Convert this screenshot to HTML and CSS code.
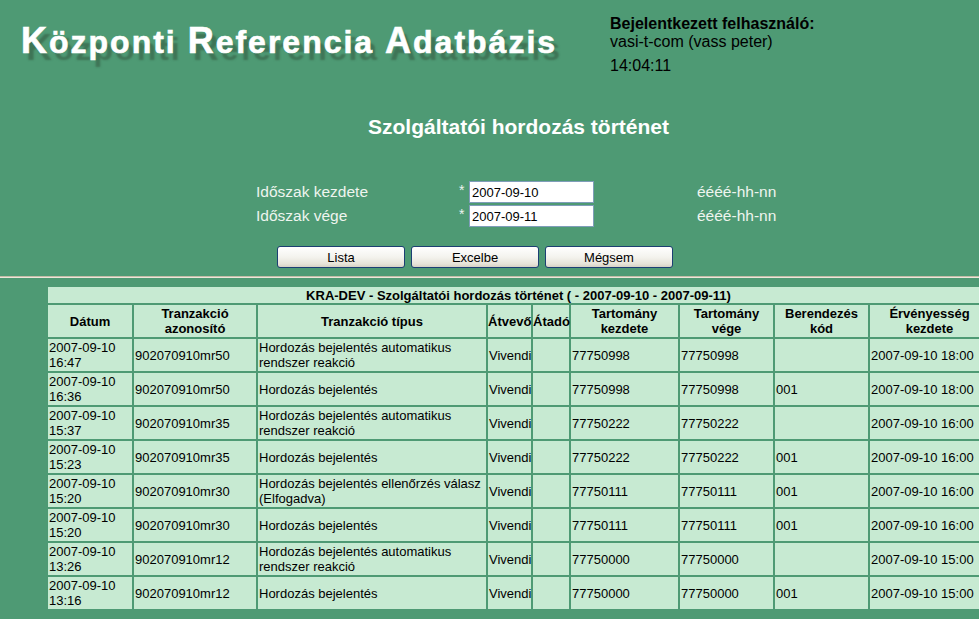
FILE: index.html
```html
<!DOCTYPE html>
<html lang="hu">
<head>
<meta charset="utf-8">
<title>Szolgáltatói hordozás történet</title>
<link rel="stylesheet" href="styles.css">
</head>
<body>
<div class="top">
  <div class="logo"><span class="cap">K</span><span class="low">özponti </span><span class="cap">R</span><span class="low">eferencia </span><span class="cap">A</span><span class="low">datbázis</span></div>
  <div class="user">
    <div class="user-label">Bejelentkezett felhasználó:</div>
    <div class="user-name">vasi-t-com (vass peter)</div>
    <div class="user-time">14:04:11</div>
  </div>
</div>

<h1 class="title">Szolgáltatói hordozás történet</h1>

<form class="filter">
  <div class="frow">
    <span class="flabel">Időszak kezdete</span>
    <span class="fstar">*</span>
    <input class="finput" type="text" value="2007-09-10">
    <span class="fformat">éééé-hh-nn</span>
  </div>
  <div class="frow">
    <span class="flabel">Időszak vége</span>
    <span class="fstar">*</span>
    <input class="finput" type="text" value="2007-09-11">
    <span class="fformat">éééé-hh-nn</span>
  </div>
  <div class="buttons">
    <button type="button" class="btn">Lista</button>
    <button type="button" class="btn">Excelbe</button>
    <button type="button" class="btn">Mégsem</button>
  </div>
</form>

<div class="sep"></div>

<table class="grid">
  <colgroup>
    <col class="c-date"><col class="c-id"><col class="c-type"><col class="c-atv"><col class="c-ata">
    <col class="c-tk"><col class="c-tv"><col class="c-ber"><col class="c-erv">
  </colgroup>
  <tr><td class="cap-cell" colspan="9">KRA-DEV - Szolgáltatói hordozás történet ( - 2007-09-10 - 2007-09-11)</td></tr>
  <tr class="head">
    <th>Dátum</th><th>Tranzakció azonosító</th><th>Tranzakció típus</th><th>Átvevő</th><th>Átadó</th>
    <th>Tartomány kezdete</th><th>Tartomány vége</th><th>Berendezés kód</th><th>Érvényesség kezdete</th>
  </tr>
  <tr><td>2007-09-10 16:47</td><td>902070910mr50</td><td>Hordozás bejelentés automatikus rendszer reakció</td><td>Vivendi</td><td></td><td>77750998</td><td>77750998</td><td></td><td>2007-09-10 18:00</td></tr>
  <tr><td>2007-09-10 16:36</td><td>902070910mr50</td><td>Hordozás bejelentés</td><td>Vivendi</td><td></td><td>77750998</td><td>77750998</td><td>001</td><td>2007-09-10 18:00</td></tr>
  <tr><td>2007-09-10 15:37</td><td>902070910mr35</td><td>Hordozás bejelentés automatikus rendszer reakció</td><td>Vivendi</td><td></td><td>77750222</td><td>77750222</td><td></td><td>2007-09-10 16:00</td></tr>
  <tr><td>2007-09-10 15:23</td><td>902070910mr35</td><td>Hordozás bejelentés</td><td>Vivendi</td><td></td><td>77750222</td><td>77750222</td><td>001</td><td>2007-09-10 16:00</td></tr>
  <tr><td>2007-09-10 15:20</td><td>902070910mr30</td><td>Hordozás bejelentés ellenőrzés válasz (Elfogadva)</td><td>Vivendi</td><td></td><td>77750111</td><td>77750111</td><td>001</td><td>2007-09-10 16:00</td></tr>
  <tr><td>2007-09-10 15:20</td><td>902070910mr30</td><td>Hordozás bejelentés</td><td>Vivendi</td><td></td><td>77750111</td><td>77750111</td><td>001</td><td>2007-09-10 16:00</td></tr>
  <tr><td>2007-09-10 13:26</td><td>902070910mr12</td><td>Hordozás bejelentés automatikus rendszer reakció</td><td>Vivendi</td><td></td><td>77750000</td><td>77750000</td><td></td><td>2007-09-10 15:00</td></tr>
  <tr><td>2007-09-10 13:16</td><td>902070910mr12</td><td>Hordozás bejelentés</td><td>Vivendi</td><td></td><td>77750000</td><td>77750000</td><td>001</td><td>2007-09-10 15:00</td></tr>
</table>
</body>
</html>
```

FILE: styles.css
```css
html, body {
  margin: 0;
  padding: 0;
  overflow: hidden;
}
body {
  background: #4e9a74;
  font-family: "Liberation Sans", Arial, sans-serif;
  color: #000;
  width: 1040px;
}

/* header */
.top {
  display: flex;
  height: 100px;
}
.logo {
  width: 589px;
  padding-left: 21px;
  margin-top: 21px;
  height: 40px;
  font-weight: bold;
  font-size: 36px;
  line-height: 40px;
  letter-spacing: 2px;
  color: #fff;
  white-space: nowrap;
  -webkit-text-stroke: 0.6px #fff;
  text-shadow: 5px 7px 2px #3f7456;
}
.logo .low {
  font-size: 32px;
  line-height: 1;
}
.user {
  padding-top: 15px;
  font-size: 16px;
  line-height: 18px;
  color: #000;
}
.user-label { font-weight: bold; }
.user-time { margin-top: 6px; }

/* title */
.title {
  margin: 15px 0 0 46px;
  width: 945px;
  text-align: center;
  font-size: 21px;
  line-height: 24px;
  font-weight: bold;
  color: #fff;
}

/* filter form */
.filter {
  margin: 42px 0 0 0;
}
.frow {
  display: grid;
  grid-template-columns: 203px 10px 125px auto;
  align-items: center;
  padding-left: 256px;
  height: 22px;
  margin-bottom: 2px;
  font-size: 15.5px;
  color: #eef5ef;
}
.fstar {
  font-size: 14px;
  position: relative;
  top: -2px;
}
.fformat {
  padding-left: 103px;
}
.finput {
  box-sizing: border-box;
  width: 125px;
  height: 22px;
  margin: 0;
  border: 1px solid #7f9db9;
  padding: 0 2px;
  background: #fff;
  font-family: "Liberation Sans", Arial, sans-serif;
  font-size: 13px;
  color: #000;
}
.buttons {
  display: flex;
  gap: 6px;
  padding-left: 277px;
  margin-top: 19px;
}
.btn {
  box-sizing: border-box;
  width: 128px;
  height: 22px;
  margin: 0;
  padding: 0;
  border: 1px solid #1c3f73;
  border-radius: 3px;
  background: linear-gradient(#ffffff 0%, #f4f3ee 50%, #e6e3d8 85%, #d6d0c4 100%);
  font-family: "Liberation Sans", Arial, sans-serif;
  font-size: 13px;
  color: #000;
}

/* separator */
.sep {
  margin-top: 8px;
  height: 0;
  border-top: 1px solid #c4bca8;
  border-bottom: 1px solid #ece7da;
  width: 100%;
}

/* data table */
.grid {
  margin: 7px 0 0 46px;
  width: 945px;
  table-layout: fixed;
  border-collapse: separate;
  border-spacing: 2px;
  font-size: 13px;
  line-height: 15px;
}
.c-date { width: 84px; }
.c-id { width: 122px; }
.c-type { width: 228px; }
.c-atv { width: 43px; }
.c-ata { width: 36px; }
.c-tk { width: 107px; }
.c-tv { width: 93px; }
.c-ber { width: 93px; }
.c-erv { width: 119px; }

.grid td, .grid th {
  background: #c7ead2;
  padding: 0 1px;
  height: 32px;
  vertical-align: middle;
  text-align: left;
  color: #000;
  white-space: normal;
}
.grid th {
  font-weight: bold;
  text-align: center;
  padding: 0;
}
.grid td.cap-cell {
  height: 16px;
  font-weight: bold;
  text-align: center;
  line-height: 15px;
}
```
